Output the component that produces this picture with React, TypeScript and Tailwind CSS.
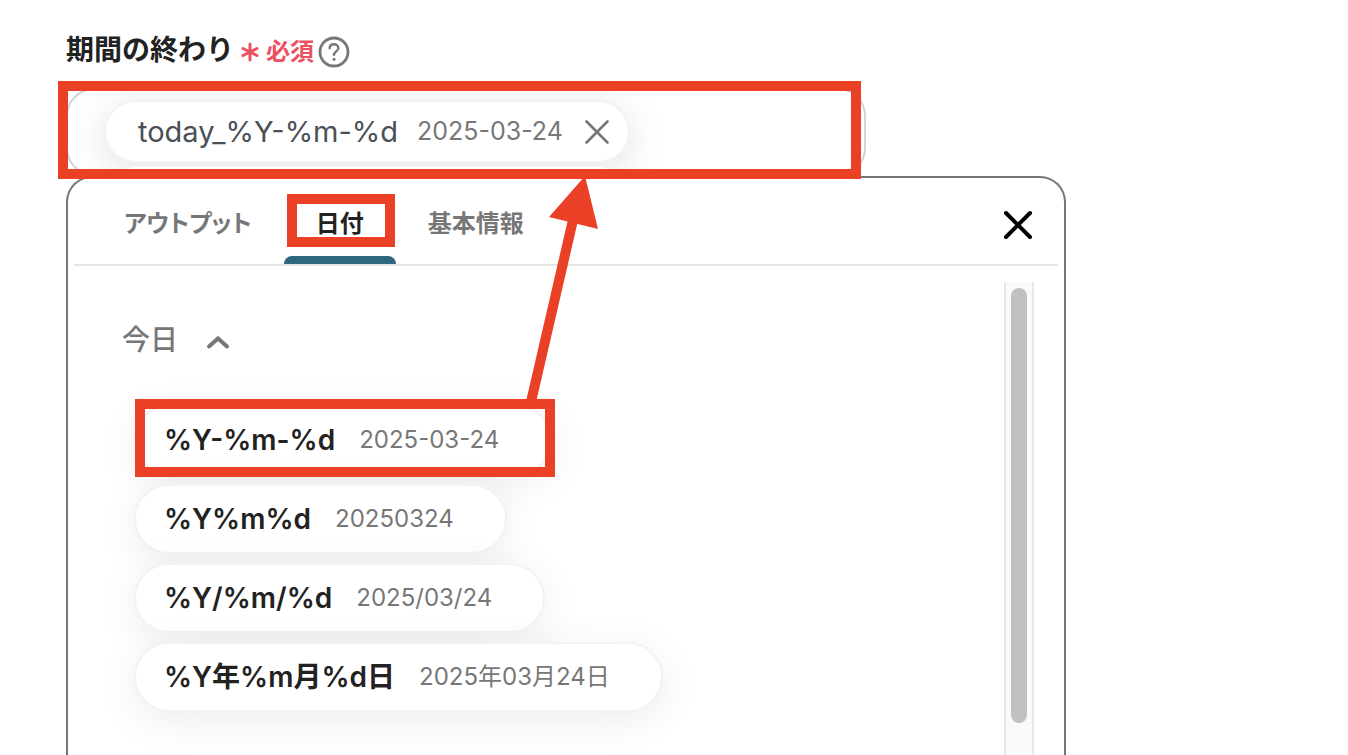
import React, { useState } from 'react';

interface DateFormat {
  format: string;
  example: string;
}

const TABS = ['アウトプット', '日付', '基本情報'];

const FORMATS: DateFormat[] = [
  { format: '%Y-%m-%d', example: '2025-03-24' },
  { format: '%Y%m%d', example: '20250324' },
  { format: '%Y/%m/%d', example: '2025/03/24' },
  { format: '%Y年%m月%d日', example: '2025年03月24日' },
];

const HelpIcon = () => (
  <svg viewBox="0 0 32 32" className="w-8 h-8" fill="none" stroke="#777777" strokeLinecap="round">
    <circle cx="16" cy="16" r="14" strokeWidth="2.8" />
    <path d="M11.6 12.2c.3-2.5 2-3.9 4.4-3.9s4.4 1.5 4.4 3.7c0 3.3-4.4 3.5-4.4 6.8" strokeWidth="2.4" />
    <circle cx="16" cy="23.2" r="1.5" fill="#777777" stroke="none" />
  </svg>
);

const CrossIcon = ({ className, strokeWidth }: { className: string; strokeWidth: number }) => (
  <svg viewBox="0 0 32 32" className={className} fill="none" stroke="currentColor" strokeWidth={strokeWidth} strokeLinecap="round">
    <path d="M4 4l24 24M28 4L4 28" />
  </svg>
);

const Highlight = ({ className }: { className: string }) => (
  <span className={`absolute z-20 border-10 border-[#ea4025] pointer-events-none ${className}`} />
);

const DateChip = ({ item, highlighted }: { item: DateFormat; highlighted: boolean }) => (
  <li className="relative">
    <button
      type="button"
      className="flex items-center gap-6 h-[70px] pl-7 pr-[51px] rounded-full border-2 border-[#f3f3f3] bg-white shadow-[0_8px_40px_rgba(0,0,0,0.08)] whitespace-nowrap"
    >
      <span className="text-[28px] font-semibold text-[#222222]">{item.format}</span>
      <span className="text-2xl text-[#777777]">{item.example}</span>
    </button>
    {highlighted && <Highlight className="-top-1.5 left-px -right-[3px] -bottom-0.5" />}
  </li>
);

const App: React.FC = () => {
  const [activeTab, setActiveTab] = useState('日付');
  const [open, setOpen] = useState(true);

  return (
    <main className="relative h-screen overflow-hidden flex flex-col pl-[66px] pr-6 pt-7 bg-white font-['Inter','Noto_Sans_CJK_JP',sans-serif]">
      <div className="flex items-center h-11 mb-4 whitespace-nowrap">
        <label htmlFor="period-end" className="text-[28px] font-semibold text-[#222222]">期間の終わり</label>
        <span className="flex items-center gap-1.5 ml-1.5 mr-1 pt-1 text-2xl font-semibold text-[#eb5160]">
          <svg viewBox="0 0 20 20" className="w-5 h-5" stroke="currentColor" strokeWidth="3" strokeLinecap="round">
            <path d="M10 2v16M3 6.5l14 7M17 6.5l-14 7" />
          </svg>
          必須
        </span>
        <button type="button" aria-label="ヘルプ" className="mt-1"><HelpIcon /></button>
      </div>

      <div className="relative w-full max-w-[800px] shrink-0">
        <div className="h-[88px] pl-9 pt-2.5 rounded-[28px] border-2 border-[#ced4da] overflow-hidden">
          <div className="flex items-center w-[526px] h-[63px] pl-8 rounded-full border-2 border-[#f3f3f3] bg-white shadow-[0_8px_40px_rgba(0,0,0,0.12)]">
            <span className="w-[279px] text-[29px] text-[#495057]">today_%Y-%m-%d</span>
            <span className="w-[166px] text-[25px] text-[#777777]">2025-03-24</span>
            <button type="button" aria-label="削除" className="text-[#777777]">
              <CrossIcon className="w-7 h-7" strokeWidth={3} />
            </button>
          </div>
          <input id="period-end" readOnly className="block mt-0.5 w-[526px] h-[63px] rounded-full border-2 border-[#f3f3f3] bg-white outline-none" />
        </div>
        <Highlight className="-left-2 right-[5px] -top-[7px] -bottom-[3px]" />
      </div>

      <section className="relative z-10 flex flex-col flex-1 min-h-0 w-full max-w-[1000px] px-1.5 rounded-t-[26px] border-2 border-b-0 border-[#777777] bg-white">
        <header className="flex items-stretch h-[88px] shrink-0 pl-[18px] pr-6 border-b-2 border-[#e4e4e4]">
          <nav role="tablist" className="flex flex-1 text-2xl font-semibold whitespace-nowrap">
            {TABS.map((tab) => (
              <button
                key={tab}
                type="button"
                role="tab"
                aria-selected={tab === activeTab}
                onClick={() => setActiveTab(tab)}
                className={`relative px-8 pt-1.5 [font-feature-settings:'palt'] ${tab === activeTab ? 'text-[#222222]' : 'text-[#777777]'}`}
              >
                {tab}
                {tab === activeTab && <span className="absolute inset-x-0 bottom-0 h-2 rounded-t-lg bg-[#2f6780]" />}
                {tab === '日付' && <Highlight className="left-[3px] right-px top-4 bottom-[17px]" />}
              </button>
            ))}
          </nav>
          <button type="button" aria-label="閉じる" className="pt-2 text-black">
            <CrossIcon className="w-8 h-8" strokeWidth={4} />
          </button>
        </header>

        <div className="flex flex-1 min-h-0 pt-4 pr-6">
          <div className="flex-1 min-h-0 overflow-hidden">
            <button
              type="button"
              aria-expanded={open}
              onClick={() => setOpen(!open)}
              className="flex items-center gap-7 h-11 mt-9 ml-12 text-[28px] font-medium text-[#777777]"
            >
              今日
              <svg viewBox="0 0 24 24" className="w-6 h-6 mt-1" fill="none" stroke="currentColor" strokeWidth="4" strokeLinecap="round">
                <path d="M3 16.5l9-8 9 8" />
              </svg>
            </button>
            {open && (
              <ul className="flex flex-col items-start gap-[9px] mt-[43px] ml-[60px]">
                {FORMATS.map((item, i) => (
                  <DateChip key={item.format} item={item} highlighted={i === 0} />
                ))}
              </ul>
            )}
          </div>
          <div className="w-[30px] pt-1.5 border-x-2 border-[#e8e8e8] bg-[#fafafa]">
            <div className="w-4 h-[435px] mx-auto rounded-full bg-[#c1c1c1]" />
          </div>
        </div>
      </section>

      {/* arrow from the first format up to the field */}
      <svg viewBox="0 0 60 230" className="absolute z-30 left-[540px] top-[176px] w-[60px] h-[230px] pointer-events-none overflow-visible">
        <path d="M-9 226L33 44" stroke="#ea4025" strokeWidth="10" />
        <path d="M45 0L9 41L58 53Z" fill="#ea4025" />
      </svg>
    </main>
  );
};

export default App;
